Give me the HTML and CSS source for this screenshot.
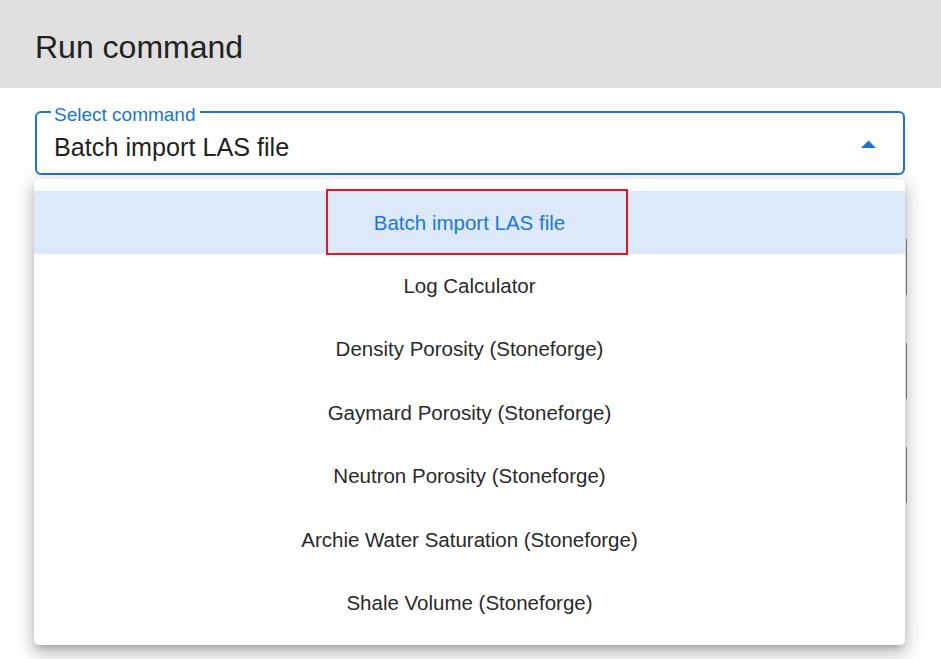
FILE: index.html
```html
<!DOCTYPE html>
<html>
<head>
<meta charset="utf-8">
<link rel="stylesheet" href="styles.css">
</head>
<body>
<div class="dialog">
  <header class="title-bar"><h1 class="title">Run command</h1></header>
  <div class="content">
    <div class="field">
      <fieldset class="outline"><legend class="legend">Select command</legend></fieldset>
      <div class="value">Batch import LAS file</div>
      <svg class="arrow" width="15" height="8" viewBox="0 0 15 8"><path d="M0 8 L7.5 0.5 L15 8 Z" fill="#1976d2"/></svg>
    </div>
    <div class="behind">
      <div class="ghost"></div>
      <div class="ghost"></div>
      <div class="ghost"></div>
    </div>
  </div>
  <ul class="menu">
    <li class="item selected">Batch import LAS file</li>
    <li class="item">Log Calculator</li>
    <li class="item">Density Porosity (Stoneforge)</li>
    <li class="item">Gaymard Porosity (Stoneforge)</li>
    <li class="item">Neutron Porosity (Stoneforge)</li>
    <li class="item">Archie Water Saturation (Stoneforge)</li>
    <li class="item">Shale Volume (Stoneforge)</li>
  </ul>
  <div class="highlight-box"></div>
</div>
</body>
</html>
```
FILE: styles.css
```css
* { box-sizing: border-box; }
html, body { margin: 0; padding: 0; background: #fff; }
body { font-family: "Liberation Sans", Arial, sans-serif; color: #212121; width: 941px; height: 659px; overflow: hidden; }
.dialog { position: relative; width: 941px; height: 659px; }
.title-bar { background: #e0e0e0; height: 88px; display: flex; align-items: center; padding-left: 35px; }
.title { margin: 0; font-weight: 400; font-size: 32px; line-height: 1; color: #222; padding-bottom: 0; margin-top: 6px; }
.content { padding: 0 36px 0 35px; }
.field { position: relative; margin-top: 24px; height: 63px; }
.outline { position: absolute; left: 0; right: 0; top: -13px; bottom: 0; margin: 0; padding: 0 14px; border: 2px solid #1976d2; border-radius: 6px; }
.legend { padding: 6px 4px 0 3px; margin-left: 0; font-size: 19px; line-height: 20px; color: #1976d2; }
.value { position: absolute; left: 19px; top: 20px; font-size: 25.2px; line-height: 30px; color: #222; }
.arrow { position: absolute; right: 29px; top: 28px; }
.behind { display: flex; flex-direction: column; gap: 48px; margin-top: 64px; align-items: flex-end; margin-right: -2px; }
.ghost { width: 1px; height: 56px; background: #8a8a8a; }
.menu { position: absolute; left: 34px; top: 179px; width: 871px; margin: 0; padding: 12px 0 10px; list-style: none; background: #fff; border-radius: 5px; box-shadow: 0 5px 6px -3px rgba(0,0,0,0.2), 0 9px 14px 1px rgba(0,0,0,0.14), 0 3px 20px 4px rgba(0,0,0,0.12); }
.item { height: 63.4px; display: flex; align-items: center; justify-content: center; font-size: 20.5px; color: #2a2a2a; }
.item.selected { background: #dbe9f8; color: #1f78d1; }
.highlight-box { position: absolute; left: 326px; top: 189px; width: 302px; height: 66px; border: 2px solid #e8141e; }
```
